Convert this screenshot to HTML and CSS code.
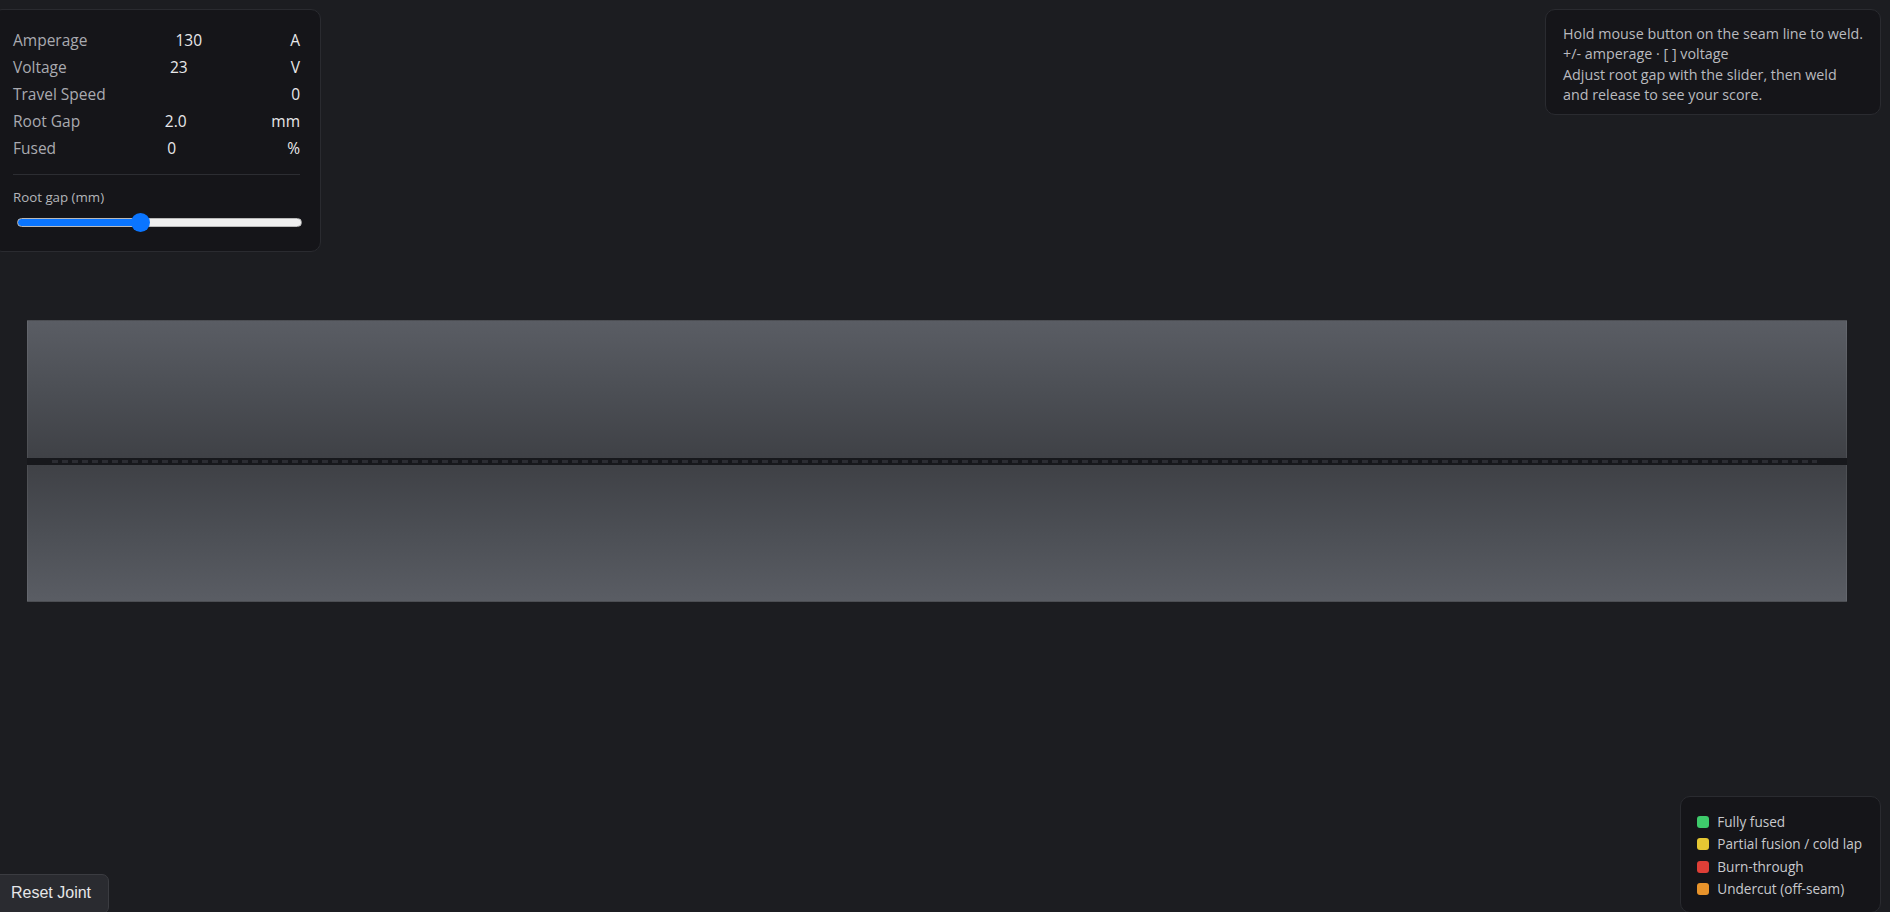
FILE: index.html
```html
<!DOCTYPE html>
<html lang="en">
<head>
<meta charset="utf-8">
<title>Root Pass Welding Trainer</title>
<link rel="stylesheet" href="styles.css">
</head>
<body>
  <main class="stage">
    <div class="workpiece">
      <div class="plate plate-top"></div>
      <div class="seam"><div class="seam-gap"></div></div>
      <div class="plate plate-bottom"></div>
    </div>
  </main>

  <section class="hud">
    <div class="readout">
      <div class="row"><span class="label">Amperage</span><span class="value">130</span><span class="unit">A</span></div>
      <div class="row"><span class="label">Voltage</span><span class="value">23</span><span class="unit">V</span></div>
      <div class="row"><span class="label">Travel Speed</span><span class="value">0</span></div>
      <div class="row"><span class="label">Root Gap</span><span class="value">2.0</span><span class="unit">mm</span></div>
      <div class="row"><span class="label">Fused</span><span class="value">0</span><span class="unit">%</span></div>
    </div>
    <div class="control">
      <label class="control-label" for="gap">Root gap (mm)</label>
      <input id="gap" class="slider" type="range" min="0.5" max="4" step="0.1" value="2" style="--fill: 43.5%">
    </div>
  </section>

  <aside class="help">
    Hold mouse button on the seam line to weld.<br>
    +/- amperage · [ ] voltage<br>
    Adjust root gap with the slider, then weld<br>
    and release to see your score.
  </aside>

  <aside class="legend">
    <div class="legend-item"><span class="swatch swatch-fused"></span>Fully fused</div>
    <div class="legend-item"><span class="swatch swatch-partial"></span>Partial fusion / cold lap</div>
    <div class="legend-item"><span class="swatch swatch-burn"></span>Burn-through</div>
    <div class="legend-item"><span class="swatch swatch-undercut"></span>Undercut (off-seam)</div>
  </aside>

  <button class="reset" type="button">Reset Joint</button>
</body>
</html>
```

FILE: styles.css
```css
* {
  box-sizing: border-box;
}

html, body {
  margin: 0;
  height: 100%;
}

body {
  background: #1c1d21;
  color: #d6d7db;
  font-family: "Open Sans", "Noto Sans", sans-serif;
  overflow: hidden;
  position: relative;
}

/* ---- workpiece: two plates with the root gap between ---- */
.stage {
  display: flex;
  flex-direction: column;
  padding: 320px 0 0 27px;
}

.workpiece {
  width: 1820px;
  display: flex;
  flex-direction: column;
}

.plate {
  height: 138px;
  border: 1px solid rgba(255, 255, 255, 0.07);
}

.plate-top {
  background: linear-gradient(to bottom, #5a5d64 0%, #4c4f55 50%, #3f4146 100%);
  border-bottom: none;
}

.plate-bottom {
  height: 137px;
  background: linear-gradient(to bottom, #3f4146 0%, #4c4f55 50%, #5a5d64 100%);
  border-top: none;
}

.seam {
  height: 7px;
  background: #17181c;
  display: flex;
  align-items: center;
  padding: 0 30px 0 25px;
}

.seam-gap {
  flex: 1;
  height: 3px;
  background: repeating-linear-gradient(to right, #2b2c32 0 6px, transparent 6px 10px);
}

/* ---- readout panel ---- */
.hud {
  position: absolute;
  top: 9px;
  left: -8px;
  width: 329px;
  padding: 17px 20px 19px 20px;
  background: #151519;
  border: 1px solid #2a2b30;
  border-radius: 10px;
}

.row {
  display: flex;
  justify-content: space-between;
  font-size: 15.5px;
  line-height: 26.9px;
}

.label {
  color: #a9aab0;
}

.value,
.unit {
  color: #e8e8ea;
}

.control {
  margin-top: 12px;
  padding-top: 13px;
  border-top: 1px solid #2c2d32;
  display: flex;
  flex-direction: column;
  gap: 7px;
}

.control-label {
  font-size: 13.3px;
  line-height: 18px;
  color: #b4b5ba;
}

.slider {
  -webkit-appearance: none;
  appearance: none;
  width: 285px;
  height: 9px;
  margin: 5px 0 5px 4px;
  border-radius: 5px;
  border: 1px solid #b9b9b9;
  background: linear-gradient(to right, #0a75ff var(--fill), #efefef var(--fill));
  outline: none;
}

.slider::-webkit-slider-thumb {
  -webkit-appearance: none;
  appearance: none;
  width: 19px;
  height: 19px;
  border-radius: 50%;
  background: #0a75ff;
  border: none;
}

/* ---- instructions ---- */
.help {
  position: absolute;
  top: 9px;
  right: 9px;
  padding: 14px 17px 9px;
  background: #151519;
  border: 1px solid #2a2b30;
  border-radius: 10px;
  font-size: 14.3px;
  line-height: 20.3px;
  color: #b9babf;
  white-space: nowrap;
}

/* ---- legend ---- */
.legend {
  position: absolute;
  right: 9px;
  bottom: -1px;
  padding: 14px 18px 12px 16px;
  background: #151519;
  border: 1px solid #2a2b30;
  border-radius: 10px;
  font-size: 13.6px;
  line-height: 22.2px;
  color: #c8c9cd;
}

.legend-item {
  display: flex;
  align-items: center;
  gap: 8px;
}

.swatch {
  width: 12px;
  height: 12px;
  border-radius: 3px;
}

.swatch-fused { background: #3ecb6b; }
.swatch-partial { background: #e6c733; }
.swatch-burn { background: #de3f37; }
.swatch-undercut { background: #e8932b; }

/* ---- reset button ---- */
.reset {
  position: absolute;
  left: -8px;
  bottom: -2px;
  padding: 9px 17px 11px 18px;
  font-family: "Liberation Sans", Arial, sans-serif;
  font-size: 16px;
  color: #e6e6e8;
  background: #2a2b30;
  border: 1px solid #3b3c41;
  border-radius: 7px;
}
```
